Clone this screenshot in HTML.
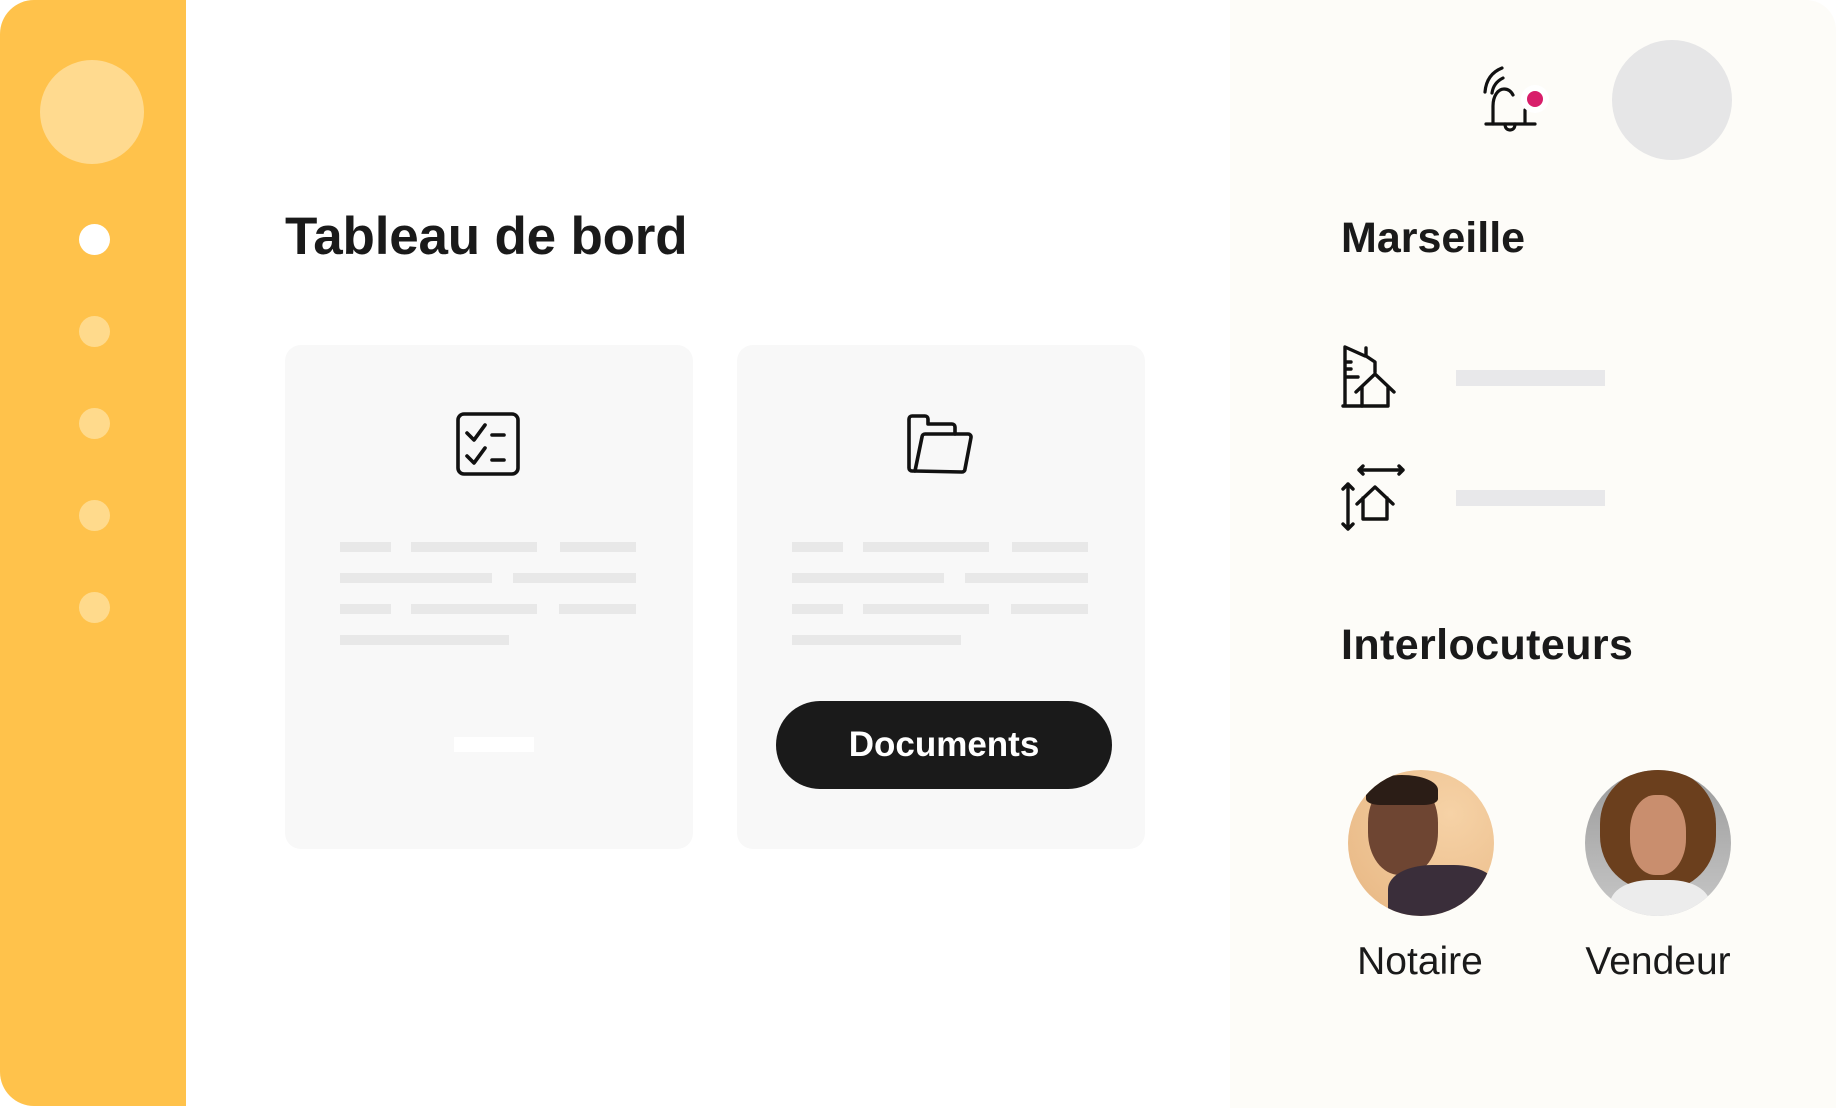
<!DOCTYPE html>
<html><head><meta charset="utf-8"><style>
*{margin:0;padding:0;box-sizing:border-box}
body{width:1836px;height:1108px;background:#fff;position:relative;overflow:hidden;font-family:"Liberation Sans",sans-serif;color:#1a1a1a}
.abs{position:absolute}
.side{left:0;top:0;width:186px;height:1106px;background:#FFC24B;border-radius:34px 0 0 34px}
.dot{position:absolute;left:79px;width:31px;height:31px;border-radius:50%;background:#FFDA8C}
.right{left:1230px;top:0;width:606px;height:1108px;background:#FDFCF8;border-radius:0 30px 0 0}
.card{top:345px;width:408px;height:504px;background:#F8F8F8;border-radius:16px}
.ln{position:absolute;height:10px;background:#E8E8E8}
.bar{position:absolute;left:1456px;width:149px;height:16px;background:#E8E8EA}
</style></head><body>
<div class="abs side"></div>
<div class="abs" style="left:40px;top:60px;width:104px;height:104px;border-radius:50%;background:#FFDA8F"></div>
<div class="dot" style="top:224px;background:#fff"></div>
<div class="dot" style="top:316px"></div>
<div class="dot" style="top:408px"></div>
<div class="dot" style="top:500px"></div>
<div class="dot" style="top:592px"></div>
<div class="abs right"></div>

<div class="abs" style="left:285px;top:206px;font-size:53px;font-weight:bold;letter-spacing:-0.2px">Tableau de bord</div>

<div class="abs card" style="left:285px"></div>
<div class="abs card" style="left:737px"></div>

<svg class="abs" style="left:455px;top:411px" width="66" height="66" viewBox="0 0 66 66" fill="none" stroke="#111" stroke-width="3.6" stroke-linecap="round" stroke-linejoin="round">
<rect x="3" y="3" width="60" height="60" rx="6"/>
<path d="M12 22l7 7 11-15M37 24h12M12 45l7 7 11-15M37 49h12"/></svg>

<svg class="abs" style="left:907px;top:413px" width="68" height="62" viewBox="0 0 68 62" fill="none" stroke="#111" stroke-width="3.6" stroke-linecap="round" stroke-linejoin="round">
<path d="M8 58H5a3 3 0 0 1-3-3V6a3 3 0 0 1 3-3h13a3 3 0 0 1 3 3v5h24a3 3 0 0 1 3 3v7"/>
<path d="M8 58l7-34a3 3 0 0 1 3-3h43a3 3 0 0 1 3 3.5l-6 31.5a3 3 0 0 1-3 3z"/></svg>

<div class="ln" style="left:340px;top:542px;width:51px"></div>
<div class="ln" style="left:411px;top:542px;width:126px"></div>
<div class="ln" style="left:560px;top:542px;width:76px"></div>
<div class="ln" style="left:340px;top:573px;width:152px"></div>
<div class="ln" style="left:513px;top:573px;width:123px"></div>
<div class="ln" style="left:340px;top:604px;width:51px"></div>
<div class="ln" style="left:411px;top:604px;width:126px"></div>
<div class="ln" style="left:559px;top:604px;width:77px"></div>
<div class="ln" style="left:340px;top:635px;width:169px"></div>
<div class="abs" style="left:454px;top:737px;width:80px;height:15px;background:#fff"></div>

<div class="ln" style="left:792px;top:542px;width:51px"></div>
<div class="ln" style="left:863px;top:542px;width:126px"></div>
<div class="ln" style="left:1012px;top:542px;width:76px"></div>
<div class="ln" style="left:792px;top:573px;width:152px"></div>
<div class="ln" style="left:965px;top:573px;width:123px"></div>
<div class="ln" style="left:792px;top:604px;width:51px"></div>
<div class="ln" style="left:863px;top:604px;width:126px"></div>
<div class="ln" style="left:1011px;top:604px;width:77px"></div>
<div class="ln" style="left:792px;top:635px;width:169px"></div>

<div class="abs" style="left:776px;top:701px;width:336px;height:88px;border-radius:44px;background:#1A1A1A;color:#fff;font-size:35px;font-weight:bold;text-align:center;line-height:88px">Documents</div>

<svg class="abs" style="left:1482px;top:64px" width="64" height="72" viewBox="0 0 64 72" fill="none" stroke="#111" stroke-width="3.2" stroke-linecap="round" stroke-linejoin="round">
<path d="M3 28C4 16 10 8 20 4M10 29C11 22 15 17 21 14"/>
<path d="M11 60V42c0-10 5-17 11-17 4 0 7 2 9 6"/>
<path d="M43 46v14M4 60h49"/>
<path d="M23 60c0 4 2 6 5 6s5-2 5-6"/></svg>
<div class="abs" style="left:1521px;top:85px;width:28px;height:28px;border-radius:50%;background:#fff"></div>
<div class="abs" style="left:1527px;top:91px;width:16px;height:16px;border-radius:50%;background:#D81E6A"></div>
<div class="abs" style="left:1612px;top:40px;width:120px;height:120px;border-radius:50%;background:#E6E6E7"></div>

<div class="abs" style="left:1341px;top:214px;font-size:43px;font-weight:bold">Marseille</div>

<svg class="abs" style="left:1338px;top:342px" width="70" height="68" viewBox="0 0 70 68" fill="none" stroke="#111" stroke-width="3.4" stroke-linecap="round" stroke-linejoin="round">
<path d="M5 64h19M7 64V5l20 9M28 6v8l9 6v10M7 20h6M7 27h6M7 35h13"/>
<path d="M18 50l19-18 19 18M24 45v19h26V45"/></svg>
<div class="bar" style="top:370px"></div>

<svg class="abs" style="left:1338px;top:462px" width="70" height="70" viewBox="0 0 70 70" fill="none" stroke="#111" stroke-width="3.4" stroke-linecap="round" stroke-linejoin="round">
<path d="M21 8h44M25 4l-4 4 4 4M61 4l4 4-4 4"/>
<path d="M10 22v45M5 27l5-5 5 5M5 62l5 5 5-5"/>
<path d="M19 42l18-17 18 17M25 36v21h24V36"/></svg>
<div class="bar" style="top:490px"></div>

<div class="abs" style="left:1341px;top:621px;font-size:43px;font-weight:bold;letter-spacing:0.4px">Interlocuteurs</div>

<div class="abs" style="left:1348px;top:770px;width:146px;height:146px;border-radius:50%;overflow:hidden;background:radial-gradient(circle at 70% 30%,#F6D2A6,#E7B682)">
<div class="abs" style="left:20px;top:10px;width:70px;height:95px;border-radius:45%;background:#6E4532"></div>
<div class="abs" style="left:18px;top:5px;width:72px;height:30px;border-radius:50% 50% 20% 20%;background:#2B1D16"></div>
<div class="abs" style="left:40px;top:95px;width:110px;height:60px;border-radius:40% 40% 0 0;background:#3A2E3A"></div></div>
<div class="abs" style="left:1585px;top:770px;width:146px;height:146px;border-radius:50%;overflow:hidden;background:linear-gradient(#9A9A9A,#C8C8C8)">
<div class="abs" style="left:15px;top:0;width:116px;height:120px;border-radius:45%;background:#6B3F1D"></div>
<div class="abs" style="left:45px;top:25px;width:56px;height:80px;border-radius:45%;background:#C98E6E"></div>
<div class="abs" style="left:25px;top:110px;width:100px;height:60px;border-radius:40% 40% 0 0;background:#ECECEC"></div></div>

<div class="abs" style="left:1330px;top:940px;width:180px;text-align:center;font-size:39px">Notaire</div>
<div class="abs" style="left:1568px;top:940px;width:180px;text-align:center;font-size:39px">Vendeur</div>
</body></html>
